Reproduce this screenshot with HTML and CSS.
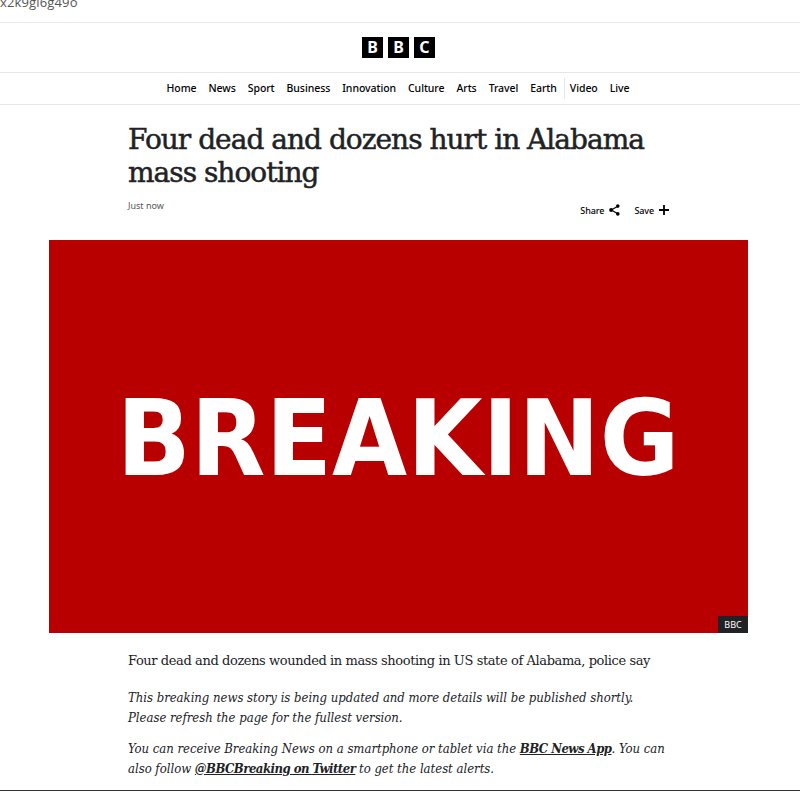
FILE: index.html
```
<!DOCTYPE html>
<html lang="en">
  <head>
    <meta charset="utf-8">
    <title>Four dead and dozens hurt in Alabama mass shooting</title>
    <link rel="stylesheet" href="styles.css">
  </head>
  <body>
    <div class="address-bar"><span>x2k9gl6g49o</span></div>
    <header>
      <a class="logo"><span>B</span><span>B</span><span>C</span></a>
    </header>
    <nav>
      <a>Home</a>
      <a>News</a>
      <a>Sport</a>
      <a>Business</a>
      <a>Innovation</a>
      <a>Culture</a>
      <a>Arts</a>
      <a>Travel</a>
      <a class="last">Earth</a>
      <a>Video</a>
      <a>Live</a>
    </nav>
    <article>
      <h1>Four dead and dozens hurt in Alabama<br>mass shooting</h1>
      <div class="byline">
        <time>Just now</time>
        <div class="actions">
          <button>Share
            <svg width="11" height="12" viewBox="0 0 11 12">
              <path d="M8.8 2.2 2.3 6l6.5 3.8" fill="none" stroke="#000" stroke-width="1.2"/>
              <circle cx="8.8" cy="2.1" r="1.8"/>
              <circle cx="2.1" cy="6" r="1.9"/>
              <circle cx="8.8" cy="9.9" r="1.8"/>
            </svg>
          </button>
          <button>Save
            <svg width="10" height="10" viewBox="0 0 10 10">
              <path d="M5 0v10M0 5h10" stroke="#000" stroke-width="1.8"/>
            </svg>
          </button>
        </div>
      </div>
      <figure>
        <span class="breaking">BREAKING</span>
        <figcaption>BBC</figcaption>
      </figure>
      <p class="intro">Four dead and dozens wounded in mass shooting in US state of Alabama, police say</p>
      <p class="note">This breaking news story is being updated and more details will be published shortly.<br>Please refresh the page for the fullest version.</p>
      <p class="note">You can receive Breaking News on a smartphone or tablet via the <a>BBC News App</a>. You can<br>also follow <a>@BBCBreaking on Twitter</a> to get the latest alerts.</p>
    </article>
    <footer></footer>
  </body>
</html>
```
FILE: styles.css
```
* {
  box-sizing: border-box;
}

body {
  margin: 0;
  height: 794px;
  overflow: hidden;
  background: #fff;
  color: #202224;
  font-family: "Noto Sans", sans-serif;
}

/* Header */
.address-bar {
  display: flex;
  align-items: flex-end;
  height: 23px;
  padding-bottom: 11px;
  border-bottom: 1px solid #ebebeb;
  overflow: hidden;
  font-family: "Open Sans", sans-serif;
  font-size: 13px;
  line-height: 18px;
  letter-spacing: 0.15px;
  color: #555;
}

header {
  display: flex;
  justify-content: center;
  align-items: center;
  height: 50px;
  padding-right: 3px;
  border-bottom: 1px solid #e6e6e6;
}

.logo {
  display: flex;
  gap: 5px;
}

.logo span {
  width: 21px;
  height: 21px;
  background: #000;
  color: #fff;
  font-size: 16px;
  font-weight: 700;
  line-height: 21px;
  text-align: center;
}

nav {
  display: flex;
  align-items: center;
  height: 32px;
  padding-left: 160.5px;
  border-bottom: 1px solid #e6e6e6;
}

nav a {
  padding: 0 6px;
  color: #000;
  font-size: 10.5px;
  font-weight: 500;
  line-height: 21px;
  letter-spacing: -0.07px;
}

nav .last {
  padding-right: 7px;
  border-right: 1px solid #e6e6e6;
}

nav .last + a {
  padding-left: 5px;
}

/* Article */
article {
  width: 544px;
  margin-left: 128px;
}

h1 {
  margin: 0;
  padding-top: 18px;
  font-family: "DejaVu Serif", serif;
  font-size: 28px;
  font-weight: 400;
  line-height: 33px;
  letter-spacing: -0.98px;
  -webkit-text-stroke: 0.5px #202224;
  white-space: nowrap;
}

.byline {
  display: flex;
  justify-content: space-between;
  height: 51px;
  padding-top: 10px;
  padding-right: 3px;
}

time {
  color: #545658;
  font-size: 9px;
  line-height: 14px;
}

.actions {
  display: flex;
  gap: 14px;
  height: 22px;
}

button {
  display: flex;
  align-items: center;
  gap: 5px;
  padding: 0;
  border: 0;
  background: none;
  color: #000;
  font-family: inherit;
  font-size: 9px;
  font-weight: 500;
  letter-spacing: -0.1px;
}

figure {
  position: relative;
  display: flex;
  justify-content: center;
  align-items: center;
  width: 699px;
  height: 393px;
  margin: 0 0 0 -79px;
  padding-top: 6px;
  background: #b80000;
}

.breaking {
  color: #fff;
  font-family: "DejaVu Sans", sans-serif;
  font-size: 105px;
  font-weight: 700;
  line-height: 1;
  transform: scaleX(0.925);
}

figcaption {
  position: absolute;
  right: 0;
  bottom: 0;
  width: 30px;
  height: 17px;
  background: #202224;
  color: #fff;
  font-size: 9px;
  line-height: 17px;
  text-align: center;
}

p {
  margin: 0;
  font-family: "DejaVu Serif Condensed", "DejaVu Serif", serif;
  font-size: 13px;
  line-height: 20px;
  white-space: nowrap;
}

.intro {
  padding-top: 18px;
  margin-bottom: 17px;
  font-family: "DejaVu Serif", serif;
  letter-spacing: -0.4px;
}

.note {
  margin-bottom: 11px;
  font-stretch: condensed;
  font-style: italic;
  letter-spacing: -0.02px;
}

.note a {
  font-weight: 700;
  letter-spacing: -0.5px;
  text-decoration: underline;
}

footer {
  border-top: 1px solid #333;
}
```
